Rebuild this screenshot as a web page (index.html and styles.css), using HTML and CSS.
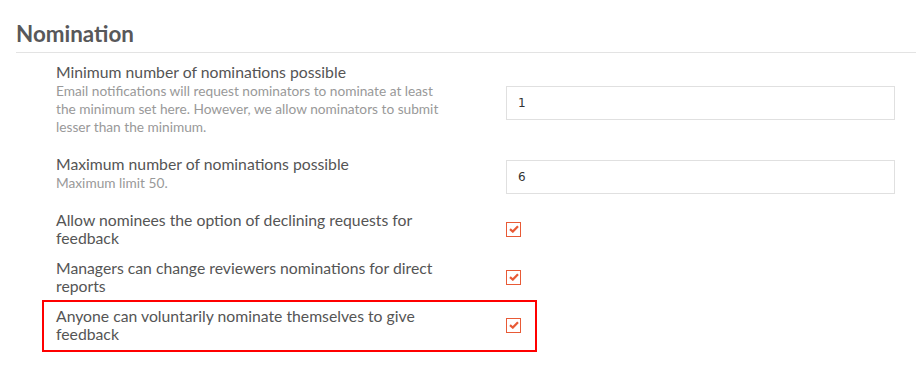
FILE: index.html
```html
<!DOCTYPE html>
<html>
<head>
<meta charset="utf-8">
<link rel="stylesheet" href="styles.css">
</head>
<body>
<div class="page">
  <h2 class="section-title">Nomination</h2>
  <div class="rows">
    <div class="row">
      <div class="label-col">
        <div class="label">Minimum number of nominations possible</div>
        <div class="help">Email notifications will request nominators to nominate at least the minimum set here. However, we allow nominators to submit lesser than the minimum.</div>
      </div>
      <div class="control-col"><input class="text-input" type="text" value="1"></div>
    </div>
    <div class="row">
      <div class="label-col">
        <div class="label">Maximum number of nominations possible</div>
        <div class="help">Maximum limit 50.</div>
      </div>
      <div class="control-col"><input class="text-input" type="text" value="6"></div>
    </div>
    <div class="row">
      <div class="label-col">
        <div class="label">Allow nominees the option of declining requests for feedback</div>
      </div>
      <div class="control-col"><span class="check"><svg viewBox="0 0 10 8" width="10" height="8"><path d="M1 4.2 L3.8 6.6 L9 1.2" fill="none" stroke="#e85a36" stroke-width="2.2" stroke-linejoin="miter"/></svg></span></div>
    </div>
    <div class="row">
      <div class="label-col">
        <div class="label">Managers can change reviewers nominations for direct reports</div>
      </div>
      <div class="control-col"><span class="check"><svg viewBox="0 0 10 8" width="10" height="8"><path d="M1 4.2 L3.8 6.6 L9 1.2" fill="none" stroke="#e85a36" stroke-width="2.2" stroke-linejoin="miter"/></svg></span></div>
    </div>
    <div class="row highlighted">
      <div class="label-col">
        <div class="label">Anyone can voluntarily nominate themselves to give feedback</div>
      </div>
      <div class="control-col"><span class="check"><svg viewBox="0 0 10 8" width="10" height="8"><path d="M1 4.2 L3.8 6.6 L9 1.2" fill="none" stroke="#e85a36" stroke-width="2.2" stroke-linejoin="miter"/></svg></span></div>
      <div class="highlight-box"></div>
    </div>
  </div>
</div>
</body>
</html>
```

FILE: styles.css
```css
* { box-sizing: border-box; }
html, body { margin: 0; padding: 0; background: #fff; }
body { font-family: Lato, "Open Sans", sans-serif; color: #555; min-height: 371px; }
.page { padding: 0 8px 30px 16px; }
.section-title {
  margin: 0;
  padding-top: 21px;
  padding-bottom: 5px;
  font-size: 22.4px;
  line-height: 26px;
  font-weight: 700;
  color: #58585a;
  border-bottom: 1px solid #e3e3e3;
}
.rows {
  padding: 10px 0 0 40px;
  display: flex;
  flex-direction: column;
  gap: 12px;
}
.row {
  position: relative;
  display: grid;
  grid-template-columns: 392px 389px;
  column-gap: 58px;
  align-items: center;
}
.label {
  font-size: 15.75px;
  line-height: 18px;
  color: #555;
}
.help {
  font-size: 13.7px;
  line-height: 18px;
  color: #999;
  padding-top: 1px;
  margin-bottom: 7px;
}
.control-col { display: flex; align-items: center; }
.text-input {
  width: 389px;
  height: 34px;
  border: 1px solid #e0e0e0;
  border-radius: 0;
  padding: 0 11px;
  font-family: "DejaVu Sans", Verdana, sans-serif;
  font-size: 12px;
  color: #333;
  background: #fff;
  outline: none;
}
.check {
  width: 15px;
  height: 15px;
  border: 1px solid #e85a36;
  display: flex;
  align-items: center;
  justify-content: center;
}
.check svg { display: block; }
.highlight-box {
  position: absolute;
  left: -14px;
  top: -7px;
  width: 495px;
  height: 52px;
  border: 2px solid #f00;
  pointer-events: none;
}
```
